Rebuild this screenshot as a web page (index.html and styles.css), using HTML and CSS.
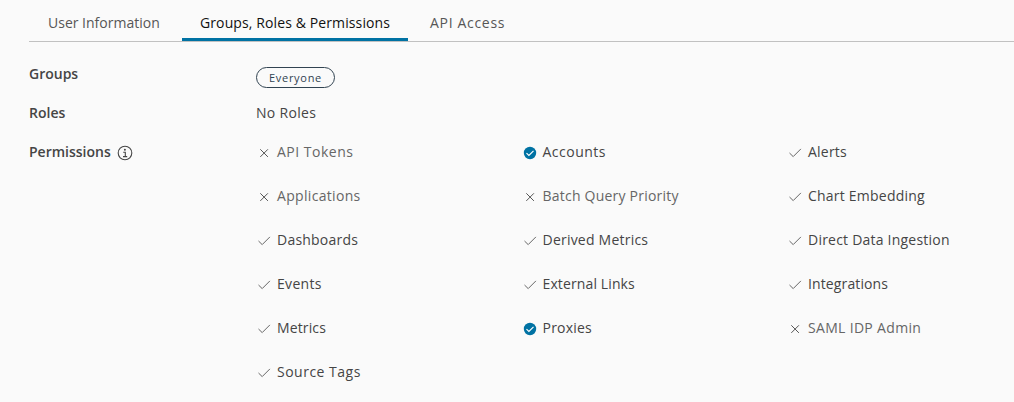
FILE: index.html
```html
<!DOCTYPE html>
<html lang="en">
<head>
<meta charset="utf-8">
<title>User</title>
<link rel="stylesheet" href="styles.css">
</head>
<body>
<svg class="defs" width="0" height="0">
  <symbol id="x" viewBox="0 0 16 16"><path d="M4.3 4.3 11.9 11.9M11.9 4.3 4.3 11.9" fill="none" stroke="#565656" stroke-width="1"/></symbol>
  <symbol id="check" viewBox="0 0 16 16"><path d="M2.5 8 6.2 11.6 13.9 3.9" fill="none" stroke="#565656" stroke-width=".9"/></symbol>
  <symbol id="on" viewBox="0 0 16 16"><circle cx="8" cy="8" r="6.2" fill="#0072a3"/><path d="M4.5 8.1 6.9 10.4 11.5 5.9" fill="none" stroke="#fff" stroke-width="1.2"/></symbol>
</svg>
<nav class="tabs">
  <a class="tab">User Information</a>
  <a class="tab active">Groups, Roles &amp; Permissions</a>
  <a class="tab wider">API Access</a>
</nav>
<main class="details">
  <div class="row"><div class="label">Groups</div><div><span class="chip">Everyone</span></div></div>
  <div class="row"><div class="label">Roles</div><div class="wide">No Roles</div></div>
  <div class="row">
    <div class="label">Permissions
      <svg class="info" viewBox="0 0 16 16"><circle cx="8" cy="8" r="6.8" fill="none" stroke="#454545" stroke-width="1.1"/><circle cx="7.9" cy="4.8" r="1" fill="#454545"/><path d="M6.2 7.3H8.3V11.5M6 11.6H10.2" fill="none" stroke="#454545" stroke-width="1.1"/></svg>
    </div>
    <div class="perms">
      <div class="perm off wider"><svg><use href="#x"/></svg>API Tokens</div>
      <div class="perm wider"><svg><use href="#on"/></svg>Accounts</div>
      <div class="perm"><svg><use href="#check"/></svg>Alerts</div>
      <div class="perm off wide"><svg><use href="#x"/></svg>Applications</div>
      <div class="perm off"><svg><use href="#x"/></svg>Batch Query Priority</div>
      <div class="perm"><svg><use href="#check"/></svg>Chart Embedding</div>
      <div class="perm"><svg><use href="#check"/></svg>Dashboards</div>
      <div class="perm"><svg><use href="#check"/></svg>Derived Metrics</div>
      <div class="perm"><svg><use href="#check"/></svg>Direct Data Ingestion</div>
      <div class="perm wide"><svg><use href="#check"/></svg>Events</div>
      <div class="perm snug"><svg><use href="#check"/></svg>External Links</div>
      <div class="perm snug"><svg><use href="#check"/></svg>Integrations</div>
      <div class="perm snug"><svg><use href="#check"/></svg>Metrics</div>
      <div class="perm"><svg><use href="#on"/></svg>Proxies</div>
      <div class="perm off wide"><svg><use href="#x"/></svg>SAML IDP Admin</div>
      <div class="perm wider"><svg><use href="#check"/></svg>Source Tags</div>
    </div>
  </div>
</main>
</body>
</html>
```
FILE: styles.css
```css
* { box-sizing: border-box; }
body { margin: 0; background: #fafafa; color: #454545; font: 14px/24px "Open Sans", sans-serif; overflow: hidden; height: 402px; }
.defs { display: block; height: 0; }
.tabs { display: flex; margin-left: 29px; height: 42px; border-bottom: 1px solid #c1c1c1; padding-left: 19px; }
.tab { height: 41px; padding-top: 11px; white-space: nowrap; color: #565656; }
.tab.active { margin: 0 22px; padding-left: 18px; width: 226px; border-bottom: 3px solid #0072a3; color: #111; letter-spacing: .11px; }
.tab:first-child { width: 112px; }
.details { padding: 20px 0 0 29px; }
.row { display: grid; grid-template-columns: 227px 1fr; min-height: 39px; }
.label { display: flex; align-items: center; height: 24px; font-weight: 600; }
.info { width: 16px; height: 16px; margin: 2px 0 0 6px; }
.chip { display: flex; width: 79px; height: 21px; margin-top: 5px; border: 1px solid #314351; border-radius: 11px; align-items: center; justify-content: center; font-size: 11px; letter-spacing: .7px; color: #314351; }
.perms { display: grid; grid-template-columns: 265.5px 265.5px 1fr; grid-auto-rows: 44px; }
.perm { display: flex; height: 24px; align-items: center; letter-spacing: .22px; }
.perm svg { width: 16px; height: 16px; margin: 2px 5px 0 0; }
.snug { letter-spacing: .12px; }
.wide { letter-spacing: .32px; }
.wider { letter-spacing: .5px; }
.tab.wider { letter-spacing: .68px; }
.off { color: #666; }
```
